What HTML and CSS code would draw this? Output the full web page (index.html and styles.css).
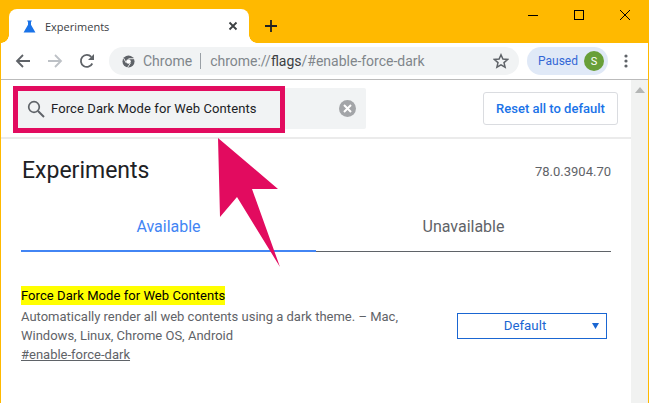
FILE: index.html
```html
<!DOCTYPE html>
<html lang="en">
<head>
  <meta charset="UTF-8" />
  <title>Experiments</title>
  <link rel="stylesheet" href="styles.css">
</head>
<body>
  <div class="window">
    <div class="titlebar">
      <div class="tab">
        <svg class="tab-icon" width="13" height="13" viewBox="0 0 14 14"><path d="M4.600 0.500h4.800v1.200H8.600v3.400L13.400 13.500H0.600L5.400 5.100V1.700H4.600z" fill="#1a73e8"/></svg>
        <span class="tab-title">Experiments</span>
        <svg class="tab-close" width="10" height="10" viewBox="0 0 10 10"><path d="M1.500 1.500l7 7M8.500 1.500l-7 7" stroke="#3c4043" stroke-width="1.800"/></svg>
      </div>
      <svg class="new-tab" width="14" height="14" viewBox="0 0 14 14"><path d="M7 1v12M1 7h12" stroke="#202124" stroke-width="1.800"/></svg>
      <div class="win-controls">
        <svg width="12" height="12" viewBox="0 0 12 12"><path d="M1 6.500h10" stroke="#000"/></svg>
        <svg width="12" height="12" viewBox="0 0 12 12"><rect x="1.500" y="1.500" width="9" height="9" fill="none" stroke="#000"/></svg>
        <svg width="12" height="12" viewBox="0 0 12 12"><path d="M1 1l10 10M11 1L1 11" stroke="#000"/></svg>
      </div>
    </div>

    <div class="toolbar">
      <svg class="nav-icon" width="16" height="16" viewBox="0 0 16 16"><path d="M15 8H2M8 2L2 8l6 6" fill="none" stroke="#5f6368" stroke-width="1.800"/></svg>
      <svg class="nav-icon" width="16" height="16" viewBox="0 0 16 16"><path d="M1 8h13M8 2l6 6-6 6" fill="none" stroke="#bdc1c6" stroke-width="1.800"/></svg>
      <svg class="nav-icon" width="16" height="16" viewBox="0 0 16 16"><path d="M13.300 10.500A6 6 0 1 1 12.300 3.800" fill="none" stroke="#5f6368" stroke-width="1.800"/><path d="M15 1v6H9z" fill="#5f6368"/></svg>
      <div class="omnibox">
        <svg width="13" height="13" viewBox="0 0 14 14"><circle cx="7" cy="7" r="6.500" fill="#5f6368"/><circle cx="7" cy="7" r="2.500" fill="#fff"/><path d="M7 4h6M4.500 8.500L1.800 3.500M9.200 8.500L6 13.500" stroke="#fff" stroke-width="0.900"/></svg>
        <span class="omni-chrome">Chrome</span>
        <span class="omni-sep"></span>
        <span class="omni-url">chrome://<b>flags</b>/#enable-force-dark</span>
        <svg class="omni-star" width="16" height="16" viewBox="0 0 16 16"><path d="M8 1.800l1.900 4.300 4.700.4-3.600 3.100 1.100 4.600L8 11.800l-4.100 2.400L5 9.600 1.400 6.500l4.700-.4z" fill="none" stroke="#5f6368" stroke-width="1.500"/></svg>
      </div>
      <div class="paused">
        <span>Paused</span>
        <span class="avatar">S</span>
      </div>
      <svg class="menu-dots" width="4" height="14" viewBox="0 0 4 14"><circle cx="2" cy="2" r="1.600" fill="#5f6368"/><circle cx="2" cy="7" r="1.600" fill="#5f6368"/><circle cx="2" cy="12" r="1.600" fill="#5f6368"/></svg>
    </div>

    <div class="page">
      <div class="content">
        <div class="flags-header">
          <div class="search">
            <svg width="18" height="18" viewBox="0 0 18 18"><circle cx="7" cy="7" r="5.300" fill="none" stroke="#5f6368" stroke-width="1.700"/><path d="M11 11l6 6" stroke="#5f6368" stroke-width="1.900"/></svg>
            <span class="search-text">Force Dark Mode for Web Contents</span>
            <svg class="search-clear" width="17" height="17" viewBox="0 0 17 17"><circle cx="8.500" cy="8.500" r="8.500" fill="#a3a5a8"/><path d="M5 5l7 7M12 5l-7 7" stroke="#fff" stroke-width="2"/></svg>
          </div>
          <button class="reset-btn">Reset all to default</button>
        </div>

        <div class="flags-body">
          <div class="title-row">
            <h1>Experiments</h1>
            <span class="version">78.0.3904.70</span>
          </div>
          <div class="tabs">
            <div class="flag-tab flag-tab-active">Available</div>
            <div class="flag-tab">Unavailable</div>
          </div>
          <div class="experiment">
            <div class="experiment-text">
              <h2><mark>Force Dark Mode for Web Contents</mark></h2>
              <p>Automatically render all web contents using a dark theme. – Mac, Windows, Linux, Chrome OS, Android</p>
              <a href="#enable-force-dark">#enable-force-dark</a>
            </div>
            <div class="select-box">
              <span>Default</span>
              <svg width="7" height="6" viewBox="0 0 7 6"><path d="M0 0h7L3.500 6z" fill="#1a66d2"/></svg>
            </div>
          </div>
        </div>
      </div>
      <div class="scrollbar">
        <svg width="10" height="6" viewBox="0 0 10 6"><path d="M5 0l5 6H0z" fill="#b4b6b5"/></svg>
      </div>
    </div>

    <!-- callout drawn on top of the screenshot -->
    <div class="callout-box"></div>
    <svg class="callout-arrow" width="70" height="135" viewBox="0 0 70 135"><path d="M1 1L61 52H35L63 130 20 60 3 80z" fill="#e20b5f"/></svg>
  </div>
</body>
</html>
```

FILE: styles.css
```css
* {
  box-sizing: border-box;
  margin: 0;
  padding: 0;
}

body {
  width: 649px;
  height: 403px;
  overflow: hidden;
  font-family: 'Roboto', sans-serif;
}

.window {
  position: relative;
  width: 649px;
  height: 403px;
  background-color: #ffb900;
  padding: 0 1px;
  display: flex;
  flex-direction: column;
  overflow: hidden;
}

.titlebar {
  height: 43px;
  display: flex;
  align-items: flex-end;
  flex: none;
}

.tab {
  position: relative;
  width: 240px;
  height: 34px;
  margin-left: 8px;
  background-color: #fff;
  border-radius: 8px 8px 0 0;
  display: flex;
  align-items: center;
  padding: 0 14px;
}

.tab::before,
.tab::after {
  content: "";
  position: absolute;
  bottom: 0;
  width: 8px;
  height: 8px;
}

.tab::before {
  left: -8px;
  background: radial-gradient(circle at 0 0, transparent 7.500px, #fff 8px);
}

.tab::after {
  right: -8px;
  background: radial-gradient(circle at 100% 0, transparent 7.500px, #fff 8px);
}

.tab-title {
  margin-left: 9px;
  font-family: 'Open Sans', sans-serif;
  font-size: 11px;
  color: #3c4043;
  flex: 1;
}

.tab-close {
  margin-right: -3px;
}

.new-tab {
  margin: 0 0 10px 15px;
}

.win-controls {
  margin-left: auto;
  align-self: flex-start;
  display: flex;
  gap: 34px;
  padding: 9px 17px 0 0;
}

.toolbar {
  height: 37px;
  flex: none;
  background-color: #fff;
  border-bottom: 1px solid #bbb;
  display: flex;
  align-items: center;
  padding: 0 14px;
}

.nav-icon {
  margin-right: 16px;
}

.nav-icon:nth-child(3) {
  margin-right: 14px;
}

.omnibox {
  width: 410px;
  height: 28px;
  background-color: #f1f3f4;
  border-radius: 14px;
  display: flex;
  align-items: center;
  padding: 0 10px 0 13px;
  font-size: 14px;
  color: #80868b;
}

.omni-chrome {
  margin-left: 8px;
}

.omni-sep {
  width: 1px;
  height: 16px;
  background-color: #9aa0a6;
  margin: 0 9px 0 8px;
}

.omni-url b {
  font-weight: 400;
  color: #3c4043;
}

.omni-star {
  margin-left: auto;
}

.paused {
  width: 81px;
  height: 28px;
  margin-left: 8px;
  background-color: #e0e9f7;
  border-radius: 14px;
  display: flex;
  align-items: center;
  justify-content: space-between;
  padding: 0 4px 0 11px;
  font-size: 12px;
  color: #3367d6;
}

.avatar {
  width: 20px;
  height: 20px;
  border-radius: 50%;
  background-color: #689f38;
  color: #fff;
  font-size: 11px;
  display: flex;
  align-items: center;
  justify-content: center;
}

.menu-dots {
  margin-left: 16px;
}

.page {
  flex: 1;
  display: flex;
  background-color: #fff;
  min-height: 0;
}

.content {
  flex: 1;
  min-width: 0;
}

.scrollbar {
  width: 17px;
  background-color: #f1f2f1;
  display: flex;
  justify-content: center;
  align-items: flex-start;
  padding-top: 7px;
}

.flags-header {
  height: 59px;
  border-bottom: 2px solid #ebebeb;
  display: flex;
  align-items: center;
  justify-content: space-between;
  padding: 0 13px 0 12px;
}

.search {
  width: 353px;
  height: 41px;
  background-color: #f1f3f4;
  border-radius: 2px;
  display: flex;
  align-items: center;
  padding: 0 10px 0 14px;
  font-size: 13px;
  color: #202124;
}

.search-text {
  margin-left: 6px;
  letter-spacing: 0.100px;
}

.search-clear {
  margin-left: auto;
}

.reset-btn {
  width: 135px;
  height: 33px;
  background-color: #fff;
  border: 1px solid #dadce0;
  border-radius: 3px;
  font-family: 'Roboto', sans-serif;
  font-size: 13px;
  font-weight: 500;
  color: #1a73e8;
}

.flags-body {
  padding: 0 20px;
}

.title-row {
  display: flex;
  justify-content: space-between;
  align-items: center;
  padding-top: 18px;
}

h1 {
  font-size: 23px;
  font-weight: 400;
  color: #202124;
  line-height: 28px;
  padding-left: 1px;
}

.version {
  font-size: 13px;
  color: #5f6368;
}

.tabs {
  display: flex;
  margin-top: 32px;
}

.flag-tab {
  flex: 1;
  height: 35px;
  text-align: center;
  font-size: 16px;
  line-height: 20px;
  color: #5f6368;
  border-bottom: 1px solid #5f6368;
}

.flag-tab-active {
  color: #4285f4;
  border-bottom: 2px solid #4285f4;
}

.experiment {
  display: flex;
  justify-content: space-between;
  align-items: center;
  margin-top: 34px;
  padding-right: 4px;
}

.experiment-text {
  width: 400px;
}

h2 {
  font-size: 13px;
  font-weight: 400;
  line-height: 19px;
  color: #000;
  letter-spacing: 0.060px;
}

mark {
  background-color: #ffff00;
  color: #000;
  display: inline-block;
}

.experiment-text p {
  font-size: 13px;
  line-height: 19px;
  color: #5f6368;
  margin-top: 2px;
}

.experiment-text a {
  display: block;
  font-size: 13px;
  line-height: 20px;
  color: #5f6368;
}

.select-box {
  position: relative;
  width: 150px;
  height: 26px;
  border: 1px solid #1a66d2;
  font-size: 13.300px;
  color: #1a66d2;
  display: flex;
  align-items: center;
  justify-content: center;
  padding-right: 14px;
}

.select-box svg {
  position: absolute;
  right: 7px;
  top: 9px;
}

.callout-box {
  position: absolute;
  left: 13px;
  top: 86px;
  width: 272px;
  height: 47px;
  border: 5px solid #e20b5f;
}

.callout-arrow {
  position: absolute;
  left: 217px;
  top: 137px;
}
```
